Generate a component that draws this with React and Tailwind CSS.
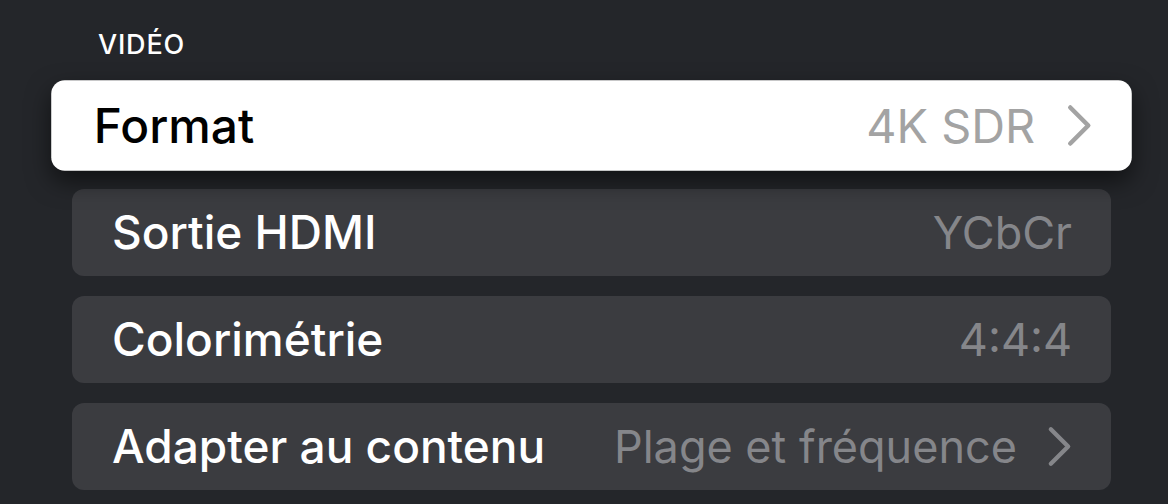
const rows = [
  { label: 'Format', value: '4K SDR', chevron: true, focused: true },
  { label: 'Sortie HDMI', value: 'YCbCr' },
  { label: 'Colorimétrie', value: '4:4:4' },
  { label: 'Adapter au contenu', value: 'Plage et fréquence', chevron: true },
];

function Chevron({ className }) {
  return (
    <svg viewBox="0 0 26 42" className={className} fill="none" stroke="currentColor" strokeWidth="4.5" strokeLinecap="round" strokeLinejoin="round">
      <path d="M4 3l18 18L4 39" />
    </svg>
  );
}

function Row({ label, value, chevron, focused }) {
  return (
    <div
      className={
        focused
          ? 'h-[87px] flex items-center justify-between pl-[41px] pr-[38px] rounded-[13px] bg-white scale-[1.04] shadow-[0_10px_24px_rgba(0,0,0,0.55)]'
          : 'h-[87px] flex items-center justify-between pl-[40px] pr-[39px] rounded-[12px] bg-[#3b3c40]'
      }
    >
      <span className={focused ? 'text-[46px] font-medium text-black' : 'text-[46px] font-medium text-white'}>{label}</span>
      <div className={focused ? 'flex items-center gap-[30px] text-[#a3a3a3]' : 'flex items-center gap-[30px] text-[#85868a]'}>
        <span className="text-[45px]">{value}</span>
        {chevron && <Chevron className="w-[25px] h-[41px]" />}
      </div>
    </div>
  );
}

export default function App() {
  return (
    <div className="h-[504px] w-[1168px] bg-[#24262a] overflow-hidden font-['Inter',sans-serif] antialiased">
      <div className="pl-[72px] w-[1111px] pt-[29px]">
        <div className="ml-[26px] text-[27px] leading-[32px] font-medium text-white tracking-[0.03em]">VIDÉO</div>
        <div className="mt-[21px] flex flex-col gap-[20px]">
          {rows.map((r) => (
            <Row key={r.label} {...r} />
          ))}
        </div>
      </div>
    </div>
  );
}
